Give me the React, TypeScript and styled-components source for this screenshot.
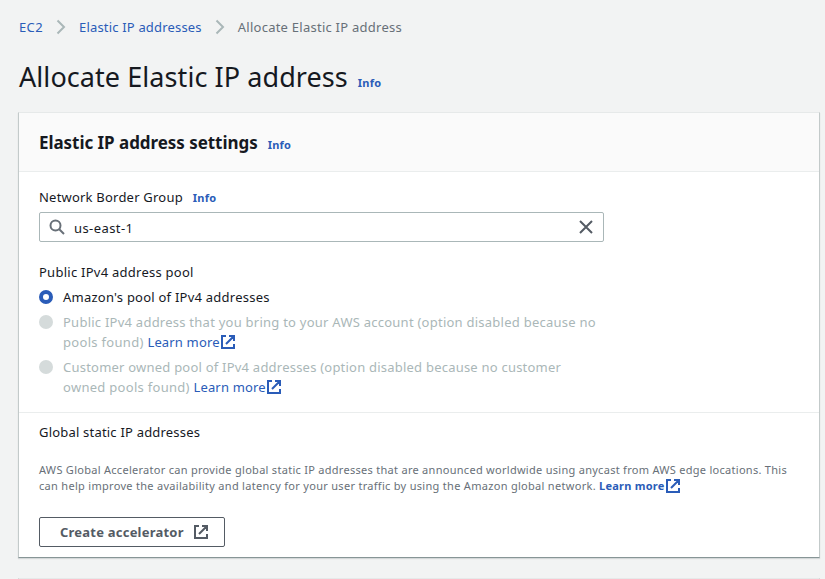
import React from 'react';
import styled, { createGlobalStyle } from 'styled-components';

const GlobalStyle = createGlobalStyle`
  * { box-sizing: border-box; }
  body {
    margin: 0;
    overflow: hidden;
    background: #f2f3f3;
    color: #16191f;
    font: 400 13px/20px 'Noto Sans', 'Open Sans', sans-serif;
  }
`;

const Page = styled.main`
  height: 579px;
  overflow: hidden;
  padding: 17px 5px 0 18px;
`;

const Breadcrumbs = styled.nav`
  display: flex;
  align-items: center;
  padding-left: 1px;
  height: 20px;
`;

const Crumb = styled.a<{ $ls: number }>`
  color: #2a5cb8;
  letter-spacing: ${(p) => p.$ls}px;
  white-space: nowrap;
`;

const CurrentCrumb = styled.span`
  color: #687078;
  letter-spacing: 0.25px;
  white-space: nowrap;
`;

const Chevron = styled.svg`
  width: 10px;
  height: 16px;
  margin: 0 13px;
  fill: none;
  stroke: #aab7b8;
  stroke-width: 2;
`;

const TitleRow = styled.header`
  display: flex;
  align-items: baseline;
  gap: 10px;
  height: 36px;
  margin: 22px 0 17px;
  padding-left: 1px;
`;

const Title = styled.h1`
  margin: 0;
  font-size: 27px;
  font-weight: 400;
  line-height: 36px;
  letter-spacing: 0.07px;
  white-space: nowrap;
`;

const InfoLink = styled.a`
  color: #2a5cb8;
  font-size: 11px;
  font-weight: 700;
  letter-spacing: 0.23px;
`;

const Card = styled.section`
  width: 802px;
  height: 446px;
  background: #fff;
  border: 1px solid #c3caca;
  border-top-color: #e6e9e9;
  border-bottom-color: #879596;
  box-shadow: 0 1px 1px rgba(0, 28, 36, 0.12);
`;

const NextCard = styled(Card)`
  height: 30px;
  margin-top: 20px;
`;

const CardHeader = styled.header`
  display: flex;
  align-items: baseline;
  gap: 10px;
  height: 59px;
  padding: 18px 20px 0;
  background: #fafafa;
  border-bottom: 1px solid #eaeded;
`;

const CardTitle = styled.h2`
  margin: 0;
  font-size: 17px;
  font-weight: 700;
  line-height: 24px;
  letter-spacing: -0.05px;
`;

const Section = styled.div`
  height: 241px;
  padding: 15px 20px 0;
  border-bottom: 1px solid #eaeded;
`;

const Label = styled.div<{ $ls: number }>`
  display: flex;
  align-items: baseline;
  gap: 10px;
  height: 20px;
  letter-spacing: ${(p) => p.$ls}px;
`;

const SearchField = styled.div`
  display: flex;
  align-items: center;
  width: 565px;
  height: 30px;
  margin: 5px 0 20px;
  padding: 0 9px;
  border: 1px solid #aab7b8;
  border-radius: 2px;
`;

const FieldIcon = styled.svg`
  width: 16px;
  height: 16px;
  flex: none;
  fill: none;
  stroke: #687078;
  stroke-width: 2;
`;

const ClearIcon = styled(FieldIcon)`
  stroke: #545b64;
`;

const Value = styled.span`
  flex: 1;
  padding: 2px 0 0 9px;
  letter-spacing: 0.42px;
`;

const Options = styled.div`
  display: flex;
  flex-direction: column;
  gap: 5px;
  padding-top: 5px;
`;

const Option = styled.label<{ $disabled?: boolean }>`
  display: flex;
  gap: 10px;
  color: ${(p) => (p.$disabled ? '#aab7b8' : '#16191f')};
`;

const Radio = styled.span<{ $checked?: boolean }>`
  flex: none;
  width: 14px;
  height: 14px;
  margin-top: 3px;
  border-radius: 50%;
  border: ${(p) => (p.$checked ? '4px solid #2a5cb8' : 'none')};
  background: ${(p) => (p.$checked ? '#fff' : '#d5dbdb')};
`;

const Line = styled.span<{ $ls: number }>`
  display: flex;
  white-space: pre;
  letter-spacing: ${(p) => p.$ls}px;
`;

const MoreLink = styled.a<{ $bold?: boolean }>`
  display: inline-flex;
  align-items: center;
  color: #2a5cb8;
  font-weight: ${(p) => (p.$bold ? 700 : 400)};
  letter-spacing: ${(p) => (p.$bold ? 0.24 : 0.16)}px;
`;

const LinkIcon = styled.svg`
  width: 16px;
  height: 16px;
  flex: none;
  fill: none;
  stroke: currentColor;
  stroke-width: 2;
`;

const Footer = styled.div`
  padding: 9px 20px 0;
`;

const Description = styled.div`
  height: 32px;
  margin-top: 20px;
  color: #687078;
  font-size: 11px;
  line-height: 16px;
`;

const Button = styled.button`
  display: flex;
  align-items: center;
  gap: 9px;
  width: 186px;
  height: 30px;
  margin-top: 23px;
  padding: 0 0 0 20px;
  background: #fff;
  color: #545b64;
  border: 1px solid #545b64;
  border-radius: 2px;
  font: 700 13px/20px 'Noto Sans', sans-serif;
  letter-spacing: 0.22px;
  white-space: nowrap;
`;

const External = () => (
  <LinkIcon viewBox="0 0 16 16">
    <path d="M6 2H2v12h12v-4M9 2h5v5M14 2L6 10" />
  </LinkIcon>
);

const LearnMore = ({ bold }: { bold?: boolean }) => (
  <MoreLink $bold={bold}>
    Learn more
    <External />
  </MoreLink>
);

const Separator = () => (
  <Chevron viewBox="0 0 10 16">
    <path d="M1.500 1.500L8 8l-6.500 6.500" />
  </Chevron>
);

export default function App() {
  return (
    <>
      <GlobalStyle />
      <Page>
        <Breadcrumbs>
          <Crumb $ls={0.373}>EC2</Crumb>
          <Separator />
          <Crumb $ls={0.18}>Elastic IP addresses</Crumb>
          <Separator />
          <CurrentCrumb>Allocate Elastic IP address</CurrentCrumb>
        </Breadcrumbs>
        <TitleRow>
          <Title>Allocate Elastic IP address</Title>
          <InfoLink>Info</InfoLink>
        </TitleRow>
        <Card>
          <CardHeader>
            <CardTitle>Elastic IP address settings</CardTitle>
            <InfoLink>Info</InfoLink>
          </CardHeader>
          <Section>
            <Label $ls={0.21}>
              Network Border Group <InfoLink>Info</InfoLink>
            </Label>
            <SearchField>
              <FieldIcon viewBox="0 0 16 16">
                <circle cx="6.500" cy="6.500" r="5" />
                <path d="M10 10l5 5" />
              </FieldIcon>
              <Value>us-east-1</Value>
              <ClearIcon viewBox="0 0 16 16">
                <path d="M2 2l12 12M14 2L2 14" />
              </ClearIcon>
            </SearchField>
            <Label $ls={0.255}>Public IPv4 address pool</Label>
            <Options>
              <Option>
                <Radio $checked />
                <Line $ls={0.235}>Amazon's pool of IPv4 addresses</Line>
              </Option>
              <Option $disabled>
                <Radio />
                <div>
                  <Line $ls={0.245}>
                    Public IPv4 address that you bring to your AWS account (option disabled because no
                  </Line>
                  <Line $ls={0.31}>
                    {'pools found) '}
                    <LearnMore />
                  </Line>
                </div>
              </Option>
              <Option $disabled>
                <Radio />
                <div>
                  <Line $ls={0.22}>
                    Customer owned pool of IPv4 addresses (option disabled because no customer
                  </Line>
                  <Line $ls={0.29}>
                    {'owned pools found) '}
                    <LearnMore />
                  </Line>
                </div>
              </Option>
            </Options>
          </Section>
          <Footer>
            <Label $ls={0.2}>Global static IP addresses</Label>
            <Description>
              <Line $ls={0.283}>
                AWS Global Accelerator can provide global static IP addresses that are announced worldwide using anycast from AWS edge locations. This
              </Line>
              <Line $ls={0.298}>
                {'can help improve the availability and latency for your user traffic by using the Amazon global network. '}
                <LearnMore bold />
              </Line>
            </Description>
            <Button>
              Create accelerator
              <External />
            </Button>
          </Footer>
        </Card>
        <NextCard />
      </Page>
    </>
  );
}
